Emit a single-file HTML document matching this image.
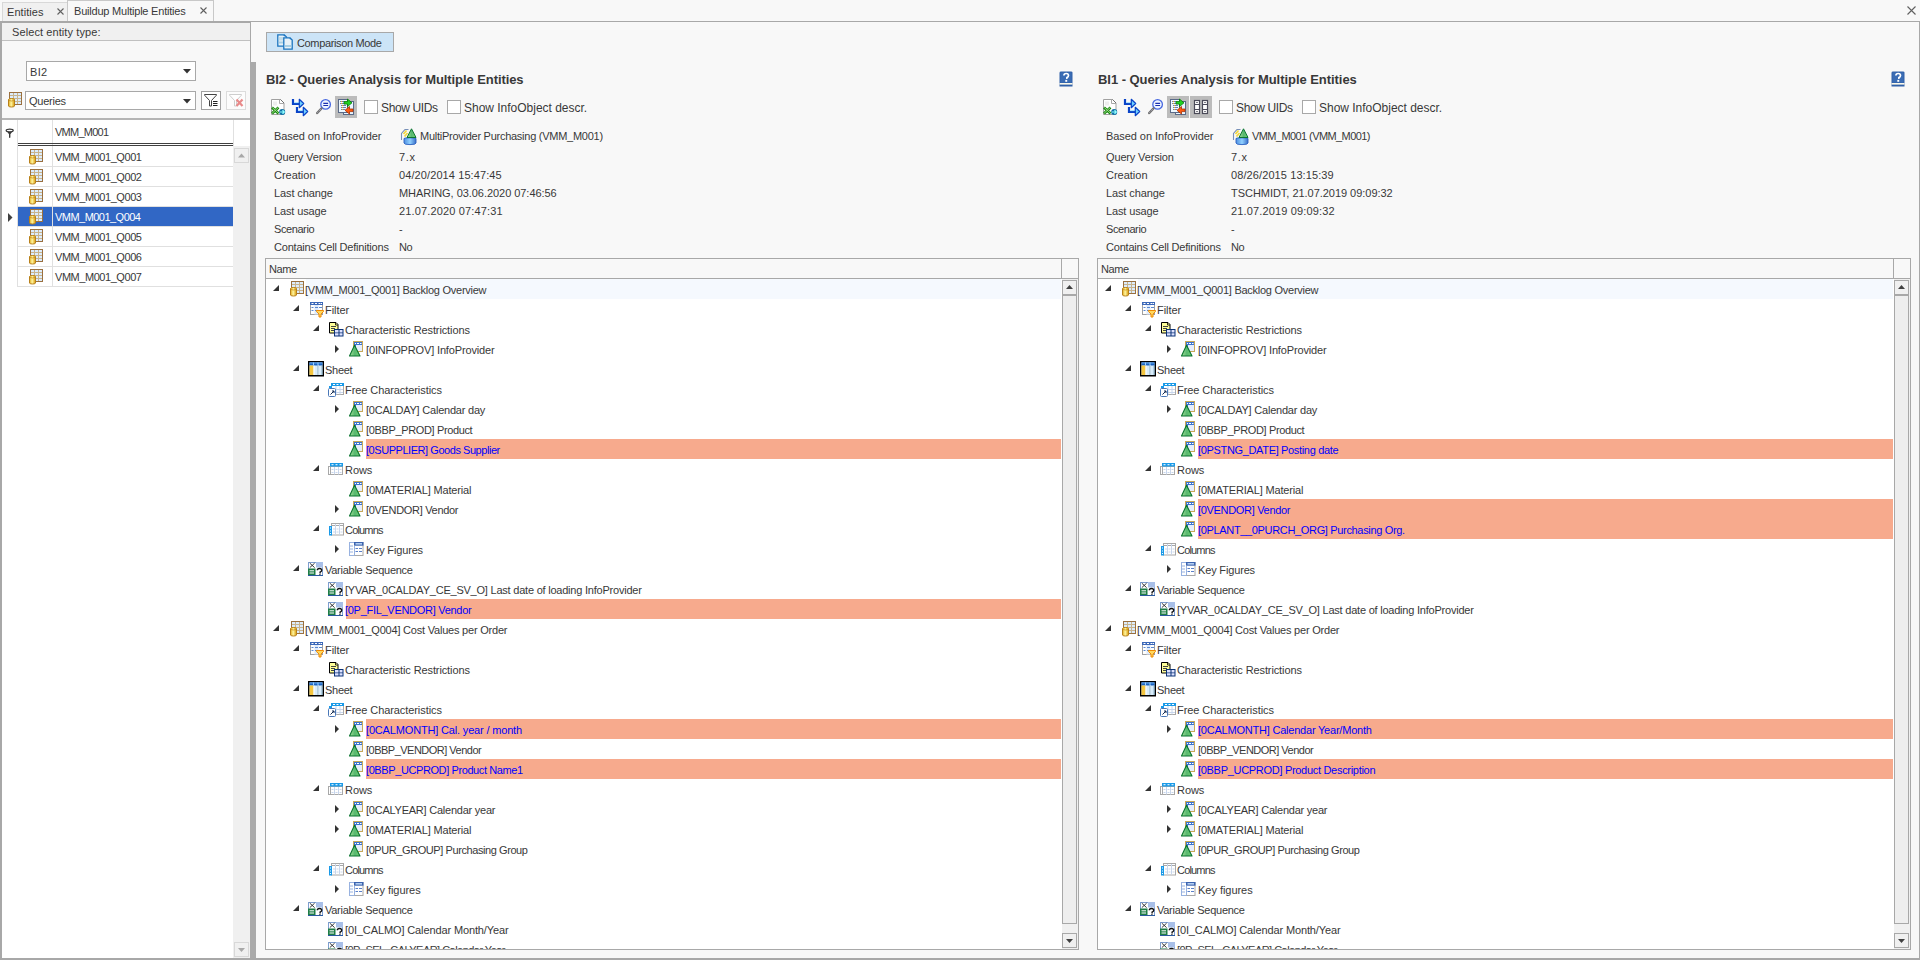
<!DOCTYPE html><html><head><meta charset="utf-8"><title>Buildup Multiple Entities</title><style>
*{margin:0;padding:0;box-sizing:border-box}
html,body{width:1920px;height:960px;overflow:hidden;background:#f8f8f8;font-family:"Liberation Sans", sans-serif;font-size:11px;color:#383838;letter-spacing:-0.25px}
.a{position:absolute}
.t{position:absolute;white-space:nowrap;line-height:13px;height:13px}
svg.i{position:absolute;width:16px;height:16px;overflow:visible}
.hl{position:absolute;background:#f7aa8d;height:20px}
.hlt{color:#0000ff}
</style></head><body>
<svg width="0" height="0" style="position:absolute">
<defs>
<linearGradient id="gold" x1="0" x2="1"><stop offset="0" stop-color="#e0a818"/><stop offset="0.45" stop-color="#fff6a0"/><stop offset="1" stop-color="#d89a08"/></linearGradient>
<linearGradient id="grn" x1="0" x2="1"><stop offset="0" stop-color="#a8e098"/><stop offset="0.5" stop-color="#58b870"/><stop offset="1" stop-color="#70cc70"/></linearGradient>
<linearGradient id="blu" x1="0" x2="1"><stop offset="0" stop-color="#4f8fe0"/><stop offset="0.5" stop-color="#90d0ff"/><stop offset="1" stop-color="#3a70c8"/></linearGradient>
<linearGradient id="lblu" x1="0" y1="0" x2="0" y2="1"><stop offset="0" stop-color="#ffffff"/><stop offset="1" stop-color="#c8e4ff"/></linearGradient>
<symbol id="q" viewBox="0 0 16 16" style="overflow:visible">
 <rect x="2.5" y="0.5" width="12" height="12" fill="#dcecfc" stroke="#9a7040"/>
 <path d="M3 3.5h11M3 6.5h11M3 9.5h11M6.5 1v11M10.5 1v11" stroke="#c8b48e"/>
 <path d="M1.5 7.5 Q1.5 6.5 4.5 6.5 Q7.5 6.5 7.5 7.5 V14 Q7.5 15 4.5 15 Q1.5 15 1.5 14Z" fill="url(#gold)" stroke="#b8801a"/>
 <path d="M2 8.5 Q4.5 9.5 7 8.5" stroke="#c89020" fill="none" stroke-width="0.8"/>
</symbol>
<symbol id="filt" viewBox="0 0 16 16" style="overflow:visible">
 <rect x="1.5" y="1.5" width="12" height="12" fill="#fff" stroke="#a0a0a0"/>
 <rect x="1" y="1" width="13" height="3" fill="#3b68b8"/>
 <path d="M2.5 2.5h2M6 2.5h2M9.5 2.5h2M12 2.5h1" stroke="#fff"/>
 <rect x="5.5" y="4" width="4" height="9.5" fill="#dde9fa"/>
 <path d="M2.5 6.5h2M2.5 9.5h2M6 6.5h3M10 6.5h3M6 9.5h3" stroke="#5a88d0"/>
 <path d="M7.5 9.5h7v1l-2.5 2.5v3h-2v-3l-2.5-2.5z" fill="#ffd860" stroke="#f08a00" stroke-linejoin="round"/>
</symbol>
<symbol id="cres" viewBox="0 0 16 16" style="overflow:visible">
 <path d="M0.5 1.5h6.5l2 2v8.5h-8.5z" fill="#ffff98" stroke="#000"/>
 <path d="M6.5 1.5v2.5h2.5" fill="none" stroke="#000" stroke-width="0.8"/>
 <path d="M2 5.5h5M2 7.5h4M2 9.5h3" stroke="#444"/>
 <rect x="5" y="8" width="9.5" height="7.5" fill="#0b3276"/>
 <path d="M6 9h3.5v2.5h-3.5zM10.5 9h3v2.5h-3zM6 12.3h3.5v2.3h-3.5zM10.5 12.3h3v2.3h-3z" fill="#dde2ff"/>
</symbol>
<symbol id="char" viewBox="0 0 16 16" style="overflow:visible">
 <rect x="4.5" y="0.5" width="9" height="10" fill="#e6eefc" stroke="#c8a858"/>
 <rect x="5" y="1" width="8" height="3" fill="#3c74d0"/>
 <path d="M6 2.5h1M8 2.5h2M11 2.5h1.5" stroke="#fff"/>
 <rect x="5" y="4" width="2" height="6" fill="#3c74d0"/>
 <path d="M5.5 4.2 L11 15 H0.5 Z" fill="url(#grn)" stroke="#0a7430" stroke-width="1.1" stroke-linejoin="round"/>
</symbol>
<symbol id="sheet" viewBox="0 0 16 16" style="overflow:visible">
 <rect x="-0.25" y="0.75" width="14.5" height="14" fill="#d8ecfa" stroke="#000" stroke-width="1.5"/>
 <rect x="0.5" y="1.5" width="13" height="3" fill="#1a62c0"/>
 <rect x="0.5" y="1.5" width="13" height="1" fill="#60a8f0"/>
 <rect x="0.5" y="4.5" width="4" height="9.5" fill="#f4c640"/>
 <path d="M5 4.5v9.5M9.5 4.5v9.5" stroke="#fff"/>
 <path d="M9 4.5v9.5M13 4.5v9.5" stroke="#8ab0c8"/>
 <path d="M4.5 1.5v3M9 1.5v3" stroke="#9cd0ff"/>
</symbol>
<symbol id="free" viewBox="0 0 16 16" style="overflow:visible">
 <rect x="2.5" y="2.5" width="12" height="11" fill="#fff" stroke="#a8a8a8"/>
 <rect x="2" y="2" width="13" height="3" fill="#1a9ae8"/>
 <path d="M4 3.5h2M7.5 3.5h2M11 3.5h2" stroke="#fff"/>
 <path d="M7 5v8.5M11 5v8.5M4 8.5h10M4 11.5h10" stroke="#c8d6ec"/>
 <rect x="0" y="5" width="3" height="2.5" fill="#1a9ae8"/>
 <rect x="-0.5" y="7.5" width="7" height="8" rx="1" fill="#fff" stroke="#4a78b8"/>
 <path d="M1.5 13.5l3.5-3.5M3 10h2v2" stroke="#102850" fill="none"/>
</symbol>
<symbol id="rows" viewBox="0 0 16 16" style="overflow:visible">
 <rect x="-0.5" y="5.5" width="14" height="8" fill="#fff" stroke="#a8a8a8"/>
 <path d="M1.5 6v7.5" stroke="#a8a8a8"/>
 <rect x="1" y="2" width="13" height="3.5" fill="#1a9ae8"/>
 <path d="M2.5 3.7h2M6.5 3.7h2M10.5 3.7h2" stroke="#fff"/>
 <path d="M5.5 6v7.5M9.5 6v7.5M2.5 8.5h2M6.5 8.5h2M10.5 8.5h2M2.5 11.5h2M6.5 11.5h2M10.5 11.5h2" stroke="#c8d6ec"/>
</symbol>
<symbol id="cols" viewBox="0 0 16 16" style="overflow:visible">
 <rect x="2.5" y="2.5" width="12" height="11.5" fill="#fff" stroke="#a8a8a8"/>
 <path d="M3 4.5h11" stroke="#a8a8a8"/>
 <path d="M6.5 3v10.5M10.5 3v10.5M4 8h2M7.5 8h2M11.5 8h2M4 11h2M7.5 11h2M11.5 11h2" stroke="#c8d6ec"/>
 <rect x="0" y="5" width="3" height="9.5" fill="#1a9ae8"/>
 <path d="M1.5 6.5v1M1.5 9.5v1M1.5 12v1" stroke="#fff"/>
</symbol>
<symbol id="kf" viewBox="0 0 16 16" style="overflow:visible">
 <rect x="0.5" y="1.5" width="5" height="13" fill="#fff" stroke="#98b2e0"/>
 <path d="M1 5h3M1 8h3M1 11h3" stroke="#98b2e0"/>
 <rect x="5.5" y="1.5" width="8.5" height="13" fill="#fff" stroke="#a8a8a8"/>
 <rect x="5" y="1" width="9.5" height="3.7" fill="#3c64b0"/>
 <rect x="6.5" y="2.2" width="6.5" height="1.3" fill="#d0e8ff"/>
 <path d="M5.5 4.5v10" stroke="#98b2e0"/>
 <path d="M6.5 7.5h2.5M10 7.5h3M6.5 10.5h2.5M10 10.5h3" stroke="#5a80c8"/>
</symbol>
<symbol id="var" viewBox="0 0 16 16" style="overflow:visible"><g transform="translate(-1,1)">
 <rect x="0.5" y="0.5" width="14" height="13" fill="#fff" stroke="#7f9fd0"/>
 <rect x="8" y="0" width="7" height="5.5" fill="#a8bfe8"/>
 <path d="M1.8 1.2l4.8 4.4M6.6 1.2l-4.8 4.4" stroke="#222" stroke-width="0.9"/>
 <rect x="0" y="6.5" width="7.5" height="7.5" fill="#1f7e46"/>
 <path d="M1.5 8.8h4.5M1.5 11h4.5" stroke="#fff" stroke-width="1"/>
 <path d="M9.3 8.3q0-1.8 2.2-1.8t2.2 1.8q0 1.2-1.6 1.8v1.3M11.9 12.2v1.2" stroke="#111" stroke-width="1.4" fill="none"/>
 <path d="M0 13.5h15" stroke="#2a5aa0"/>
</g></symbol>
<symbol id="mprov" viewBox="0 0 16 16" style="overflow:visible">
 <path d="M1.5 12V5.5l3.5-4h3.5" fill="none" stroke="#7890b8" stroke-width="1.1"/>
 <path d="M3.5 6l3-3.5M4.5 8.5l3-3.5" stroke="#f2d840" stroke-width="1.8"/>
 <path d="M4 10.5 Q4 9.8 10 9.8 Q16 9.8 16 10.5 V15 Q16 16.6 10 16.6 Q4 16.6 4 15Z" fill="url(#blu)" stroke="#2a60c0" stroke-width="0.9"/>
 <path d="M11.5 0.8 L16 9.5 H7 Z" fill="url(#grn)" stroke="#0a7430" stroke-linejoin="round"/>
</symbol>
<symbol id="help" viewBox="0 0 16 16" style="overflow:visible">
 <path d="M1.5 1.8 Q1.5 0.5 3 0.5H13Q14.5 0.5 14.5 1.8V15.5H1.5Z" fill="#3060a8"/>
 <rect x="2.5" y="1.5" width="11" height="10" fill="#3a6cb4"/>
 <rect x="1.5" y="12" width="13" height="1.6" fill="#fbf8ea"/>
 <path d="M5.9 4.6q0-2.1 2.3-2.1t2.3 2.1q0 1.4-1.6 2v1.3" stroke="#fff" stroke-width="1.7" fill="none"/>
 <rect x="7.3" y="8.9" width="1.9" height="1.9" fill="#fff"/>
</symbol>
<symbol id="excel" viewBox="0 0 16 16" style="overflow:visible">
 <path d="M1.5 0.5h9l3.5 3.5v11.5h-12.5z" fill="#fff" stroke="#a0a0a0"/>
 <path d="M9.5 0.5v4h4.5" fill="none" stroke="#a8a8a8"/>
 <path d="M10.5 0.5l3.5 3.5" stroke="#707070"/>
 <rect x="3" y="2.5" width="4" height="4" fill="#eeeeee"/>
 <path d="M2 8.5l6.5 6M8.5 8.5l-6.5 6" stroke="#1a8a10" stroke-width="2.6"/>
 <path d="M2.5 8.8l6 5.4M8 8.8l-5.8 5.4" stroke="#a8e090" stroke-width="0.9"/>
 <circle cx="12.2" cy="13" r="3" fill="#0c70a8"/>
 <path d="M10 13h4M12.5 11.3l1.8 1.7-1.8 1.7" stroke="#90ffff" stroke-width="1.2" fill="none"/>
</symbol>
<symbol id="arrows" viewBox="0 0 16 16" style="overflow:visible">
 <g id="arr1">
 <path d="M1 0v5h7" fill="none" stroke="#0a44c8" stroke-width="2.2"/>
 <path d="M2.2 3.6h5.5" stroke="#9ae0ff" stroke-width="0.9"/>
 <path d="M7.3 0.3l4.4 4.2-4.4 4.2z" fill="#70d0ff" stroke="#0a44c8" stroke-width="1.2" stroke-linejoin="round"/>
 </g>
 <use href="#arr1" x="4" y="8"/>
</symbol>
<symbol id="zoom" viewBox="0 0 16 16" style="overflow:visible">
 <circle cx="9.6" cy="5.4" r="4.8" fill="#f0f6ff" stroke="#4868e0" stroke-width="1.3"/>
 <path d="M7.3 4.4h4.8M7.3 6.5h4.8" stroke="#1a30b0" stroke-width="1.1"/>
 <path d="M1.2 14l4.2-4.5" stroke="#707070" stroke-width="2.4" stroke-linecap="round"/>
 <path d="M1.5 13.6l3.6-3.8" stroke="#d8d8f0" stroke-width="0.7" stroke-dasharray="1 1"/>
</symbol>
<symbol id="cmp" viewBox="0 0 16 16" style="overflow:visible">
 <rect x="5.5" y="2.5" width="10" height="13" fill="#eaf6ff" stroke="#5a6a88"/>
 <rect x="0.5" y="0.5" width="9" height="13" fill="#eef8ff" stroke="#5a6a88"/>
 <path d="M2 2.5h4M2 4.5h4M3 6.5h5M3 8.5h5M3 10.5h4" stroke="#6880b0" stroke-width="1"/>
 <path d="M3 2.5h1M3 4.5h1M4 6.5h1M4 8.5h1M4 10.5h1" stroke="#f0b020" stroke-width="1"/>
 <path d="M6 2.5h3.5v-2.5l4.5 3.8-4.5 3.8v-2.5h-3.5z" fill="#20d020" stroke="#087808" stroke-width="0.8" stroke-linejoin="round"/>
 <path d="M15 10h-3.5v-2.5l-4.5 3.8 4.5 3.8v-2.5h3.5z" fill="#ff5a10" stroke="#a83000" stroke-width="0.8" stroke-linejoin="round"/>
</symbol>
<symbol id="grid4" viewBox="0 0 16 16" style="overflow:visible">
 <rect x="1.5" y="1.5" width="5" height="13" fill="#fff" stroke="#4a4a58" stroke-width="1.2"/>
 <rect x="9.5" y="1.5" width="5" height="13" fill="#fff" stroke="#4a4a58" stroke-width="1.2"/>
 <path d="M1.5 5.5h5M1.5 10.5h5M9.5 5.5h5M9.5 10.5h5" stroke="#4a4a58"/>
 <path d="M3.3 3.5h1.4M3.3 12.5h1.4M11.3 3.5h1.4M11.3 12.5h1.4" stroke="#4a4a58" stroke-width="1.2"/>
</symbol>
<symbol id="cmode" viewBox="0 0 16 16" style="overflow:visible">
 <path d="M0.8 0.8h6.5l2.2 2.2v9.2h-8.7z" fill="#e8f2f8" stroke="#1a74c0" stroke-width="1.3"/>
 <rect x="1.8" y="3" width="5" height="3.5" fill="#c0dcea"/>
 <rect x="1.8" y="7.5" width="6.5" height="2" fill="#a8cfe4"/>
 <path d="M6.8 3.8h6.2l2.2 2.2v9.2h-8.4z" fill="#e8f2f8" stroke="#1a74c0" stroke-width="1.3"/>
 <rect x="7.8" y="11" width="6.5" height="2" fill="#a8cfe4"/>
 <circle cx="7.3" cy="1.6" r="0.8" fill="#1a74c0"/><circle cx="13.3" cy="4.6" r="0.8" fill="#1a74c0"/>
</symbol>
<symbol id="funnel" viewBox="0 0 16 16" style="overflow:visible">
 <path d="M1.5 1.5h12v0.6l-5 5.4v5.5h-2v-5.5l-5-5.4z" fill="#fff" stroke="#444" stroke-width="1" stroke-linejoin="round"/>
 <path d="M10 8.5h4.5M10 10.5h4.5M10 12.5h4.5" stroke="#222" stroke-width="1.1"/>
</symbol>
<symbol id="funnelx" viewBox="0 0 16 16" style="overflow:visible">
 <path d="M1.5 1.5h12v0.6l-5 5.4v5.5h-2v-5.5l-5-5.4z" fill="#fff" stroke="#c8c8c8" stroke-width="0.9"/>
 <path d="M8.5 6.5l6 6.5M14.5 6.5l-6 6.5" stroke="#e88a8a" stroke-width="2.2"/>
</symbol>
</defs></svg>
<div class="a" style="left:2px;top:2px;width:66px;height:20px;background:#f0f0f0;border:1px solid #d8d8d8;border-bottom:none"></div>
<div class="t" style="left:7px;top:6px;letter-spacing:0.061px;">Entities</div>
<svg class="a" style="left:57px;top:8px" width="7" height="7"><path d="M0.5 0.5l6 6M6.5 0.5l-6 6" stroke="#606060" stroke-width="1.1"/></svg>
<div class="a" style="left:67px;top:0px;width:147px;height:22px;background:#f8f8f8;border:1px solid #c8c8c8;border-bottom:none"></div>
<div class="t" style="left:74px;top:5px;letter-spacing:-0.211px;">Buildup Multiple Entities</div>
<svg class="a" style="left:200px;top:7px" width="7" height="7"><path d="M0.5 0.5l6 6M6.5 0.5l-6 6" stroke="#606060" stroke-width="1.1"/></svg>
<svg class="a" style="left:1907px;top:6px" width="9" height="9"><path d="M0.5 0.5l8 8M8.5 0.5l-8 8" stroke="#606060" stroke-width="1.1"/></svg>
<div class="a" style="left:0px;top:21px;width:1920px;height:1px;background:#a8a8a8"></div>
<div class="a" style="left:1919px;top:21px;width:1px;height:939px;background:#a8a8a8"></div>
<div class="a" style="left:256px;top:958px;width:1664px;height:2px;background:#a8a8a8"></div>
<div class="a" style="left:0px;top:22px;width:2px;height:938px;background:#a8a8a8"></div>
<div class="a" style="left:0px;top:22px;width:251px;height:1px;background:#a8a8a8"></div>
<div class="a" style="left:250px;top:22px;width:1px;height:40px;background:#a8a8a8"></div>
<div class="a" style="left:250px;top:62px;width:6px;height:898px;background:#aaaaaa"></div>
<div class="a" style="left:0px;top:958px;width:256px;height:2px;background:#a8a8a8"></div>
<div class="a" style="left:2px;top:23px;width:248px;height:17px;background:#f0f0f0"></div>
<div class="a" style="left:2px;top:40px;width:248px;height:1px;background:#c0c0c0"></div>
<div class="t" style="left:12px;top:26px;letter-spacing:0.091px;">Select entity type:</div>
<div class="a" style="left:26px;top:61px;width:170px;height:20px;background:#fff;border:1px solid #a8a8a8"></div>
<div class="t" style="left:30px;top:66px;letter-spacing:0.35px;">BI2</div>
<svg class="a" style="left:183px;top:69px" width="8" height="5"><path d="M0 0h8l-4 4.5z" fill="#333"/></svg>
<svg class="i" style="left:7px;top:92px;width:16px;height:16px"><use href="#q"/></svg>
<div class="a" style="left:25px;top:91px;width:171px;height:19px;background:#fff;border:1px solid #a8a8a8"></div>
<div class="t" style="left:29px;top:95px;letter-spacing:-0.236px;">Queries</div>
<svg class="a" style="left:183px;top:99px" width="8" height="5"><path d="M0 0h8l-4 4.5z" fill="#333"/></svg>
<div class="a" style="left:201px;top:91px;width:20px;height:19px;background:#fff;border:1px solid #a0a0a0"></div>
<svg class="i" style="left:203px;top:93px;width:16px;height:16px"><use href="#funnel"/></svg>
<div class="a" style="left:226px;top:91px;width:20px;height:19px;background:#fcfcfc;border:1px solid #dcdcdc"></div>
<svg class="i" style="left:228px;top:93px;width:16px;height:16px"><use href="#funnelx"/></svg>
<div class="a" style="left:2px;top:118px;width:248px;height:2px;background:#b4b4b4"></div>
<div class="a" style="left:2px;top:120px;width:248px;height:838px;background:#fff"></div>
<div class="a" style="left:233px;top:146px;width:17px;height:812px;background:#f0f0f0"></div>
<div class="a" style="left:17px;top:120px;width:1px;height:167px;background:#e0e0e0"></div>
<div class="a" style="left:52px;top:120px;width:1px;height:167px;background:#e0e0e0"></div>
<div class="a" style="left:233px;top:120px;width:1px;height:26px;background:#e0e0e0"></div>
<div class="a" style="left:18px;top:143px;width:215px;height:1px;background:#404040"></div>
<div class="a" style="left:18px;top:145px;width:215px;height:1px;background:#404040"></div>
<svg class="a" style="left:5px;top:128px" width="10" height="11"><path d="M1.3 2.6 Q4.7 5 8.1 2.6 L5.4 6.2 V9.5 Q4.7 10.3 4 9.5 V6.2 Z" fill="#3a3a3a"/><ellipse cx="4.7" cy="2.4" rx="3.6" ry="1.3" fill="#fff" stroke="#3a3a3a" stroke-width="1.1"/></svg>
<div class="t" style="left:55px;top:126px;letter-spacing:-0.74px;">VMM_M001</div>
<div class="a" style="left:18px;top:166px;width:215px;height:1px;background:#e0e0e0"></div>
<svg class="i" style="left:28px;top:149px;width:16px;height:16px"><use href="#q"/></svg>
<div class="t" style="left:55px;top:151px;letter-spacing:-0.45px;">VMM_M001_Q001</div>
<div class="a" style="left:18px;top:186px;width:215px;height:1px;background:#e0e0e0"></div>
<svg class="i" style="left:28px;top:169px;width:16px;height:16px"><use href="#q"/></svg>
<div class="t" style="left:55px;top:171px;letter-spacing:-0.45px;">VMM_M001_Q002</div>
<div class="a" style="left:18px;top:206px;width:215px;height:1px;background:#e0e0e0"></div>
<svg class="i" style="left:28px;top:189px;width:16px;height:16px"><use href="#q"/></svg>
<div class="t" style="left:55px;top:191px;letter-spacing:-0.45px;">VMM_M001_Q003</div>
<div class="a" style="left:18px;top:226px;width:215px;height:1px;background:#e0e0e0"></div>
<div class="a" style="left:18px;top:207px;width:34px;height:19px;background:#3167c5"></div>
<div class="a" style="left:53px;top:207px;width:180px;height:19px;background:#3167c5"></div>
<svg class="a" style="left:8px;top:213px" width="5" height="9"><path d="M0 0l4.5 4.5L0 9z" fill="#404040"/></svg>
<svg class="i" style="left:28px;top:209px;width:16px;height:16px"><use href="#q"/></svg>
<div class="t" style="left:55px;top:211px;letter-spacing:-0.534px;color:#fff">VMM_M001_Q004</div>
<div class="a" style="left:18px;top:246px;width:215px;height:1px;background:#e0e0e0"></div>
<svg class="i" style="left:28px;top:229px;width:16px;height:16px"><use href="#q"/></svg>
<div class="t" style="left:55px;top:231px;letter-spacing:-0.45px;">VMM_M001_Q005</div>
<div class="a" style="left:18px;top:266px;width:215px;height:1px;background:#e0e0e0"></div>
<svg class="i" style="left:28px;top:249px;width:16px;height:16px"><use href="#q"/></svg>
<div class="t" style="left:55px;top:251px;letter-spacing:-0.45px;">VMM_M001_Q006</div>
<div class="a" style="left:18px;top:286px;width:215px;height:1px;background:#e0e0e0"></div>
<svg class="i" style="left:28px;top:269px;width:16px;height:16px"><use href="#q"/></svg>
<div class="t" style="left:55px;top:271px;letter-spacing:-0.45px;">VMM_M001_Q007</div>
<div class="a" style="left:234px;top:148px;width:15px;height:15px;background:#f0f0f0;border:1px solid #d8d8d8"></div>
<svg class="a" style="left:238px;top:153px" width="8" height="5"><path d="M0 4.5h7l-3.5-4z" fill="#a8a8a8"/></svg>
<div class="a" style="left:234px;top:942px;width:15px;height:15px;background:#f0f0f0;border:1px solid #d8d8d8"></div>
<svg class="a" style="left:238px;top:948px" width="8" height="5"><path d="M0 0h7l-3.5 4z" fill="#a8a8a8"/></svg>
<div class="a" style="left:266px;top:32px;width:128px;height:20px;background:#cce4f7;border:1px solid #a8a8a8"></div>
<svg class="i" style="left:277px;top:34px;width:16px;height:16px"><use href="#cmode"/></svg>
<div class="t" style="left:297px;top:37px;letter-spacing:-0.355px;">Comparison Mode</div>
<div class="t" style="left:266px;top:72px;letter-spacing:-0.08px;font-size:13px;font-weight:bold;line-height:15px;height:15px">BI2 - Queries Analysis for Multiple Entities</div>
<svg class="i" style="left:1058px;top:71px;width:16px;height:16px"><use href="#help"/></svg>
<svg class="i" style="left:270px;top:99px;width:16px;height:16px"><use href="#excel"/></svg>
<svg class="i" style="left:292px;top:99px;width:16px;height:16px"><use href="#arrows"/></svg>
<svg class="i" style="left:316px;top:99px;width:16px;height:16px"><use href="#zoom"/></svg>
<div class="a" style="left:335px;top:96px;width:22px;height:22px;background:#bcbcbc"></div>
<svg class="i" style="left:338px;top:99px;width:16px;height:16px"><use href="#cmp"/></svg>
<div class="a" style="left:364px;top:100px;width:14px;height:14px;background:#fff;border:1px solid #a8a8a8"></div>
<div class="t" style="left:381px;top:101px;letter-spacing:-0.377px;font-size:12px;line-height:14px;height:14px">Show UIDs</div>
<div class="a" style="left:447px;top:100px;width:14px;height:14px;background:#fff;border:1px solid #a8a8a8"></div>
<div class="t" style="left:464px;top:101px;letter-spacing:-0.012px;font-size:12px;line-height:14px;height:14px">Show InfoObject descr.</div>
<div class="t" style="left:274px;top:130px;letter-spacing:-0.069px;">Based on InfoProvider</div>
<svg class="i" style="left:400px;top:128px;width:16px;height:16px"><use href="#mprov"/></svg>
<div class="t" style="left:420px;top:130px;letter-spacing:-0.262px;">MultiProvider Purchasing (VMM_M001)</div>
<div class="t" style="left:274px;top:151px;letter-spacing:-0.148px;">Query Version</div>
<div class="t" style="left:399px;top:151px;letter-spacing:0.613px;">7.x</div>
<div class="t" style="left:274px;top:169px;letter-spacing:-0.008px;">Creation</div>
<div class="t" style="left:399px;top:169px;letter-spacing:0.098px;">04/20/2014 15:47:45</div>
<div class="t" style="left:274px;top:187px;letter-spacing:-0.102px;">Last change</div>
<div class="t" style="left:399px;top:187px;letter-spacing:-0.047px;">MHARING, 03.06.2020 07:46:56</div>
<div class="t" style="left:274px;top:205px;letter-spacing:-0.123px;">Last usage</div>
<div class="t" style="left:399px;top:205px;letter-spacing:0.144px;">21.07.2020 07:47:31</div>
<div class="t" style="left:274px;top:223px;letter-spacing:-0.413px;">Scenario</div>
<div class="t" style="left:399px;top:223px;letter-spacing:-0.25px;">-</div>
<div class="t" style="left:274px;top:241px;letter-spacing:-0.205px;">Contains Cell Definitions</div>
<div class="t" style="left:399px;top:241px;letter-spacing:-0.344px;">No</div>
<div class="a" style="left:265px;top:258px;width:814px;height:692px;background:#fff;border:1px solid #a8a8a8"></div>
<div class="a" style="left:266px;top:259px;width:812px;height:19px;background:#f8f8f8"></div>
<div class="a" style="left:265px;top:278px;width:814px;height:1px;background:#a8a8a8"></div>
<div class="a" style="left:1061px;top:258px;width:1px;height:21px;background:#a8a8a8"></div>
<div class="t" style="left:269px;top:263px;letter-spacing:-0.409px;">Name</div>
<div class="a" style="left:1062px;top:279px;width:16px;height:670px;background:#f0f0f0"></div>
<div class="a" style="left:1062px;top:280px;width:15px;height:15px;background:#f0f0f0;border:1px solid #a8a8a8"></div>
<svg class="a" style="left:1066px;top:285px" width="8" height="5"><path d="M0 4h7l-3.5-4z" fill="#404040"/></svg>
<div class="a" style="left:1062px;top:295px;width:15px;height:629px;background:#eeeeee;border:1px solid #a8a8a8"></div>
<div class="a" style="left:1062px;top:933px;width:15px;height:15px;background:#f0f0f0;border:1px solid #a8a8a8"></div>
<svg class="a" style="left:1066px;top:939px" width="8" height="5"><path d="M0 0h7l-3.5 4z" fill="#404040"/></svg>
<div class="a" style="left:266px;top:279px;width:796px;height:670px;overflow:hidden">
<div class="a" style="left:40px;top:0px;width:755px;height:20px;background:#f5f9fe"></div>
<svg class="a" style="left:7px;top:6px" width="7" height="7"><path d="M6 0V6H0z" fill="#333"/></svg>
<svg class="i" style="left:23px;top:2px;width:16px;height:16px"><use href="#q"/></svg>
<div class="t" style="left:39px;top:5px;letter-spacing:-0.257px;">[VMM_M001_Q001] Backlog Overview</div>
<svg class="a" style="left:27px;top:26px" width="7" height="7"><path d="M6 0V6H0z" fill="#333"/></svg>
<svg class="i" style="left:43px;top:22px;width:16px;height:16px"><use href="#filt"/></svg>
<div class="t" style="left:59px;top:25px;letter-spacing:-0.036px;">Filter</div>
<svg class="a" style="left:47px;top:46px" width="7" height="7"><path d="M6 0V6H0z" fill="#333"/></svg>
<svg class="i" style="left:63px;top:42px;width:16px;height:16px"><use href="#cres"/></svg>
<div class="t" style="left:79px;top:45px;letter-spacing:-0.11px;">Characteristic Restrictions</div>
<svg class="a" style="left:69px;top:66px" width="5" height="9"><path d="M0 0l4 4L0 8z" fill="#333"/></svg>
<svg class="i" style="left:83px;top:62px;width:16px;height:16px"><use href="#char"/></svg>
<div class="t" style="left:100px;top:65px;letter-spacing:-0.147px;">[0INFOPROV] InfoProvider</div>
<svg class="a" style="left:27px;top:86px" width="7" height="7"><path d="M6 0V6H0z" fill="#333"/></svg>
<svg class="i" style="left:43px;top:82px;width:16px;height:16px"><use href="#sheet"/></svg>
<div class="t" style="left:59px;top:85px;letter-spacing:-0.274px;">Sheet</div>
<svg class="a" style="left:47px;top:106px" width="7" height="7"><path d="M6 0V6H0z" fill="#333"/></svg>
<svg class="i" style="left:63px;top:102px;width:16px;height:16px"><use href="#free"/></svg>
<div class="t" style="left:79px;top:105px;letter-spacing:-0.079px;">Free Characteristics</div>
<svg class="a" style="left:69px;top:126px" width="5" height="9"><path d="M0 0l4 4L0 8z" fill="#333"/></svg>
<svg class="i" style="left:83px;top:122px;width:16px;height:16px"><use href="#char"/></svg>
<div class="t" style="left:100px;top:125px;letter-spacing:-0.219px;">[0CALDAY] Calendar day</div>
<svg class="i" style="left:83px;top:142px;width:16px;height:16px"><use href="#char"/></svg>
<div class="t" style="left:100px;top:145px;letter-spacing:-0.358px;">[0BBP_PROD] Product</div>
<div class="hl" style="left:100px;top:160px;width:695px"></div>
<svg class="i" style="left:83px;top:162px;width:16px;height:16px"><use href="#char"/></svg>
<div class="t" style="left:100px;top:165px;letter-spacing:-0.45px;color:#0000ff">[0SUPPLIER] Goods Supplier</div>
<svg class="a" style="left:47px;top:186px" width="7" height="7"><path d="M6 0V6H0z" fill="#333"/></svg>
<svg class="i" style="left:63px;top:182px;width:16px;height:16px"><use href="#rows"/></svg>
<div class="t" style="left:79px;top:185px;letter-spacing:-0.068px;">Rows</div>
<svg class="i" style="left:83px;top:202px;width:16px;height:16px"><use href="#char"/></svg>
<div class="t" style="left:100px;top:205px;letter-spacing:-0.166px;">[0MATERIAL] Material</div>
<svg class="a" style="left:69px;top:226px" width="5" height="9"><path d="M0 0l4 4L0 8z" fill="#333"/></svg>
<svg class="i" style="left:83px;top:222px;width:16px;height:16px"><use href="#char"/></svg>
<div class="t" style="left:100px;top:225px;letter-spacing:-0.317px;">[0VENDOR] Vendor</div>
<svg class="a" style="left:47px;top:246px" width="7" height="7"><path d="M6 0V6H0z" fill="#333"/></svg>
<svg class="i" style="left:63px;top:242px;width:16px;height:16px"><use href="#cols"/></svg>
<div class="t" style="left:79px;top:245px;letter-spacing:-0.817px;">Columns</div>
<svg class="a" style="left:69px;top:266px" width="5" height="9"><path d="M0 0l4 4L0 8z" fill="#333"/></svg>
<svg class="i" style="left:83px;top:262px;width:16px;height:16px"><use href="#kf"/></svg>
<div class="t" style="left:100px;top:265px;letter-spacing:-0.159px;">Key Figures</div>
<svg class="a" style="left:27px;top:286px" width="7" height="7"><path d="M6 0V6H0z" fill="#333"/></svg>
<svg class="i" style="left:43px;top:282px;width:16px;height:16px"><use href="#var"/></svg>
<div class="t" style="left:59px;top:285px;letter-spacing:-0.262px;">Variable Sequence</div>
<svg class="i" style="left:63px;top:302px;width:16px;height:16px"><use href="#var"/></svg>
<div class="t" style="left:79px;top:305px;letter-spacing:-0.221px;">[YVAR_0CALDAY_CE_SV_O] Last date of loading InfoProvider</div>
<div class="hl" style="left:80px;top:320px;width:715px"></div>
<svg class="i" style="left:63px;top:322px;width:16px;height:16px"><use href="#var"/></svg>
<div class="t" style="left:79px;top:325px;letter-spacing:-0.286px;color:#0000ff">[0P_FIL_VENDOR] Vendor</div>
<svg class="a" style="left:7px;top:346px" width="7" height="7"><path d="M6 0V6H0z" fill="#333"/></svg>
<svg class="i" style="left:23px;top:342px;width:16px;height:16px"><use href="#q"/></svg>
<div class="t" style="left:39px;top:345px;letter-spacing:-0.213px;">[VMM_M001_Q004] Cost Values per Order</div>
<svg class="a" style="left:27px;top:366px" width="7" height="7"><path d="M6 0V6H0z" fill="#333"/></svg>
<svg class="i" style="left:43px;top:362px;width:16px;height:16px"><use href="#filt"/></svg>
<div class="t" style="left:59px;top:365px;letter-spacing:-0.036px;">Filter</div>
<svg class="i" style="left:63px;top:382px;width:16px;height:16px"><use href="#cres"/></svg>
<div class="t" style="left:79px;top:385px;letter-spacing:-0.11px;">Characteristic Restrictions</div>
<svg class="a" style="left:27px;top:406px" width="7" height="7"><path d="M6 0V6H0z" fill="#333"/></svg>
<svg class="i" style="left:43px;top:402px;width:16px;height:16px"><use href="#sheet"/></svg>
<div class="t" style="left:59px;top:405px;letter-spacing:-0.274px;">Sheet</div>
<svg class="a" style="left:47px;top:426px" width="7" height="7"><path d="M6 0V6H0z" fill="#333"/></svg>
<svg class="i" style="left:63px;top:422px;width:16px;height:16px"><use href="#free"/></svg>
<div class="t" style="left:79px;top:425px;letter-spacing:-0.079px;">Free Characteristics</div>
<div class="hl" style="left:100px;top:440px;width:695px"></div>
<svg class="a" style="left:69px;top:446px" width="5" height="9"><path d="M0 0l4 4L0 8z" fill="#333"/></svg>
<svg class="i" style="left:83px;top:442px;width:16px;height:16px"><use href="#char"/></svg>
<div class="t" style="left:100px;top:445px;letter-spacing:-0.166px;color:#0000ff">[0CALMONTH] Cal. year / month</div>
<svg class="i" style="left:83px;top:462px;width:16px;height:16px"><use href="#char"/></svg>
<div class="t" style="left:100px;top:465px;letter-spacing:-0.509px;">[0BBP_VENDOR] Vendor</div>
<div class="hl" style="left:100px;top:480px;width:695px"></div>
<svg class="i" style="left:83px;top:482px;width:16px;height:16px"><use href="#char"/></svg>
<div class="t" style="left:100px;top:485px;letter-spacing:-0.401px;color:#0000ff">[0BBP_UCPROD] Product Name1</div>
<svg class="a" style="left:47px;top:506px" width="7" height="7"><path d="M6 0V6H0z" fill="#333"/></svg>
<svg class="i" style="left:63px;top:502px;width:16px;height:16px"><use href="#rows"/></svg>
<div class="t" style="left:79px;top:505px;letter-spacing:-0.068px;">Rows</div>
<svg class="a" style="left:69px;top:526px" width="5" height="9"><path d="M0 0l4 4L0 8z" fill="#333"/></svg>
<svg class="i" style="left:83px;top:522px;width:16px;height:16px"><use href="#char"/></svg>
<div class="t" style="left:100px;top:525px;letter-spacing:-0.237px;">[0CALYEAR] Calendar year</div>
<svg class="a" style="left:69px;top:546px" width="5" height="9"><path d="M0 0l4 4L0 8z" fill="#333"/></svg>
<svg class="i" style="left:83px;top:542px;width:16px;height:16px"><use href="#char"/></svg>
<div class="t" style="left:100px;top:545px;letter-spacing:-0.166px;">[0MATERIAL] Material</div>
<svg class="i" style="left:83px;top:562px;width:16px;height:16px"><use href="#char"/></svg>
<div class="t" style="left:100px;top:565px;letter-spacing:-0.418px;">[0PUR_GROUP] Purchasing Group</div>
<svg class="a" style="left:47px;top:586px" width="7" height="7"><path d="M6 0V6H0z" fill="#333"/></svg>
<svg class="i" style="left:63px;top:582px;width:16px;height:16px"><use href="#cols"/></svg>
<div class="t" style="left:79px;top:585px;letter-spacing:-0.817px;">Columns</div>
<svg class="a" style="left:69px;top:606px" width="5" height="9"><path d="M0 0l4 4L0 8z" fill="#333"/></svg>
<svg class="i" style="left:83px;top:602px;width:16px;height:16px"><use href="#kf"/></svg>
<div class="t" style="left:100px;top:605px;letter-spacing:-0.033px;">Key figures</div>
<svg class="a" style="left:27px;top:626px" width="7" height="7"><path d="M6 0V6H0z" fill="#333"/></svg>
<svg class="i" style="left:43px;top:622px;width:16px;height:16px"><use href="#var"/></svg>
<div class="t" style="left:59px;top:625px;letter-spacing:-0.262px;">Variable Sequence</div>
<svg class="i" style="left:63px;top:642px;width:16px;height:16px"><use href="#var"/></svg>
<div class="t" style="left:79px;top:645px;letter-spacing:-0.119px;">[0I_CALMO] Calendar Month/Year</div>
<svg class="i" style="left:63px;top:662px;width:16px;height:16px"><use href="#var"/></svg>
<div class="t" style="left:79px;top:665px;letter-spacing:-0.532px;">[0P_SEL_CALYEAR] Calendar Year</div>
</div>
<div class="t" style="left:1098px;top:72px;letter-spacing:-0.052px;font-size:13px;font-weight:bold;line-height:15px;height:15px">BI1 - Queries Analysis for Multiple Entities</div>
<svg class="i" style="left:1890px;top:71px;width:16px;height:16px"><use href="#help"/></svg>
<svg class="i" style="left:1102px;top:99px;width:16px;height:16px"><use href="#excel"/></svg>
<svg class="i" style="left:1124px;top:99px;width:16px;height:16px"><use href="#arrows"/></svg>
<svg class="i" style="left:1148px;top:99px;width:16px;height:16px"><use href="#zoom"/></svg>
<div class="a" style="left:1167px;top:96px;width:22px;height:22px;background:#bcbcbc"></div>
<svg class="i" style="left:1170px;top:99px;width:16px;height:16px"><use href="#cmp"/></svg>
<div class="a" style="left:1190px;top:96px;width:22px;height:22px;background:#bcbcbc"></div>
<svg class="i" style="left:1193px;top:99px;width:16px;height:16px"><use href="#grid4"/></svg>
<div class="a" style="left:1219px;top:100px;width:14px;height:14px;background:#fff;border:1px solid #a8a8a8"></div>
<div class="t" style="left:1236px;top:101px;letter-spacing:-0.377px;font-size:12px;line-height:14px;height:14px">Show UIDs</div>
<div class="a" style="left:1302px;top:100px;width:14px;height:14px;background:#fff;border:1px solid #a8a8a8"></div>
<div class="t" style="left:1319px;top:101px;letter-spacing:-0.012px;font-size:12px;line-height:14px;height:14px">Show InfoObject descr.</div>
<div class="t" style="left:1106px;top:130px;letter-spacing:-0.069px;">Based on InfoProvider</div>
<svg class="i" style="left:1232px;top:128px;width:16px;height:16px"><use href="#mprov"/></svg>
<div class="t" style="left:1252px;top:130px;letter-spacing:-0.584px;">VMM_M001 (VMM_M001)</div>
<div class="t" style="left:1106px;top:151px;letter-spacing:-0.148px;">Query Version</div>
<div class="t" style="left:1231px;top:151px;letter-spacing:0.613px;">7.x</div>
<div class="t" style="left:1106px;top:169px;letter-spacing:-0.008px;">Creation</div>
<div class="t" style="left:1231px;top:169px;letter-spacing:0.098px;">08/26/2015 13:15:39</div>
<div class="t" style="left:1106px;top:187px;letter-spacing:-0.102px;">Last change</div>
<div class="t" style="left:1231px;top:187px;letter-spacing:-0.034px;">TSCHMIDT, 21.07.2019 09:09:32</div>
<div class="t" style="left:1106px;top:205px;letter-spacing:-0.123px;">Last usage</div>
<div class="t" style="left:1231px;top:205px;letter-spacing:0.144px;">21.07.2019 09:09:32</div>
<div class="t" style="left:1106px;top:223px;letter-spacing:-0.413px;">Scenario</div>
<div class="t" style="left:1231px;top:223px;letter-spacing:-0.25px;">-</div>
<div class="t" style="left:1106px;top:241px;letter-spacing:-0.205px;">Contains Cell Definitions</div>
<div class="t" style="left:1231px;top:241px;letter-spacing:-0.344px;">No</div>
<div class="a" style="left:1097px;top:258px;width:814px;height:692px;background:#fff;border:1px solid #a8a8a8"></div>
<div class="a" style="left:1098px;top:259px;width:812px;height:19px;background:#f8f8f8"></div>
<div class="a" style="left:1097px;top:278px;width:814px;height:1px;background:#a8a8a8"></div>
<div class="a" style="left:1893px;top:258px;width:1px;height:21px;background:#a8a8a8"></div>
<div class="t" style="left:1101px;top:263px;letter-spacing:-0.409px;">Name</div>
<div class="a" style="left:1894px;top:279px;width:16px;height:670px;background:#f0f0f0"></div>
<div class="a" style="left:1894px;top:280px;width:15px;height:15px;background:#f0f0f0;border:1px solid #a8a8a8"></div>
<svg class="a" style="left:1898px;top:285px" width="8" height="5"><path d="M0 4h7l-3.5-4z" fill="#404040"/></svg>
<div class="a" style="left:1894px;top:295px;width:15px;height:629px;background:#eeeeee;border:1px solid #a8a8a8"></div>
<div class="a" style="left:1894px;top:933px;width:15px;height:15px;background:#f0f0f0;border:1px solid #a8a8a8"></div>
<svg class="a" style="left:1898px;top:939px" width="8" height="5"><path d="M0 0h7l-3.5 4z" fill="#404040"/></svg>
<div class="a" style="left:1098px;top:279px;width:796px;height:670px;overflow:hidden">
<div class="a" style="left:40px;top:0px;width:755px;height:20px;background:#f5f9fe"></div>
<svg class="a" style="left:7px;top:6px" width="7" height="7"><path d="M6 0V6H0z" fill="#333"/></svg>
<svg class="i" style="left:23px;top:2px;width:16px;height:16px"><use href="#q"/></svg>
<div class="t" style="left:39px;top:5px;letter-spacing:-0.257px;">[VMM_M001_Q001] Backlog Overview</div>
<svg class="a" style="left:27px;top:26px" width="7" height="7"><path d="M6 0V6H0z" fill="#333"/></svg>
<svg class="i" style="left:43px;top:22px;width:16px;height:16px"><use href="#filt"/></svg>
<div class="t" style="left:59px;top:25px;letter-spacing:-0.036px;">Filter</div>
<svg class="a" style="left:47px;top:46px" width="7" height="7"><path d="M6 0V6H0z" fill="#333"/></svg>
<svg class="i" style="left:63px;top:42px;width:16px;height:16px"><use href="#cres"/></svg>
<div class="t" style="left:79px;top:45px;letter-spacing:-0.11px;">Characteristic Restrictions</div>
<svg class="a" style="left:69px;top:66px" width="5" height="9"><path d="M0 0l4 4L0 8z" fill="#333"/></svg>
<svg class="i" style="left:83px;top:62px;width:16px;height:16px"><use href="#char"/></svg>
<div class="t" style="left:100px;top:65px;letter-spacing:-0.147px;">[0INFOPROV] InfoProvider</div>
<svg class="a" style="left:27px;top:86px" width="7" height="7"><path d="M6 0V6H0z" fill="#333"/></svg>
<svg class="i" style="left:43px;top:82px;width:16px;height:16px"><use href="#sheet"/></svg>
<div class="t" style="left:59px;top:85px;letter-spacing:-0.274px;">Sheet</div>
<svg class="a" style="left:47px;top:106px" width="7" height="7"><path d="M6 0V6H0z" fill="#333"/></svg>
<svg class="i" style="left:63px;top:102px;width:16px;height:16px"><use href="#free"/></svg>
<div class="t" style="left:79px;top:105px;letter-spacing:-0.079px;">Free Characteristics</div>
<svg class="a" style="left:69px;top:126px" width="5" height="9"><path d="M0 0l4 4L0 8z" fill="#333"/></svg>
<svg class="i" style="left:83px;top:122px;width:16px;height:16px"><use href="#char"/></svg>
<div class="t" style="left:100px;top:125px;letter-spacing:-0.219px;">[0CALDAY] Calendar day</div>
<svg class="i" style="left:83px;top:142px;width:16px;height:16px"><use href="#char"/></svg>
<div class="t" style="left:100px;top:145px;letter-spacing:-0.358px;">[0BBP_PROD] Product</div>
<div class="hl" style="left:100px;top:160px;width:695px"></div>
<svg class="i" style="left:83px;top:162px;width:16px;height:16px"><use href="#char"/></svg>
<div class="t" style="left:100px;top:165px;letter-spacing:-0.338px;color:#0000ff">[0PSTNG_DATE] Posting date</div>
<svg class="a" style="left:47px;top:186px" width="7" height="7"><path d="M6 0V6H0z" fill="#333"/></svg>
<svg class="i" style="left:63px;top:182px;width:16px;height:16px"><use href="#rows"/></svg>
<div class="t" style="left:79px;top:185px;letter-spacing:-0.068px;">Rows</div>
<svg class="i" style="left:83px;top:202px;width:16px;height:16px"><use href="#char"/></svg>
<div class="t" style="left:100px;top:205px;letter-spacing:-0.166px;">[0MATERIAL] Material</div>
<div class="hl" style="left:100px;top:220px;width:695px"></div>
<svg class="i" style="left:83px;top:222px;width:16px;height:16px"><use href="#char"/></svg>
<div class="t" style="left:100px;top:225px;letter-spacing:-0.317px;color:#0000ff">[0VENDOR] Vendor</div>
<div class="hl" style="left:100px;top:240px;width:695px"></div>
<svg class="i" style="left:83px;top:242px;width:16px;height:16px"><use href="#char"/></svg>
<div class="t" style="left:100px;top:245px;letter-spacing:-0.337px;color:#0000ff">[0PLANT__0PURCH_ORG] Purchasing Org.</div>
<svg class="a" style="left:47px;top:266px" width="7" height="7"><path d="M6 0V6H0z" fill="#333"/></svg>
<svg class="i" style="left:63px;top:262px;width:16px;height:16px"><use href="#cols"/></svg>
<div class="t" style="left:79px;top:265px;letter-spacing:-0.817px;">Columns</div>
<svg class="a" style="left:69px;top:286px" width="5" height="9"><path d="M0 0l4 4L0 8z" fill="#333"/></svg>
<svg class="i" style="left:83px;top:282px;width:16px;height:16px"><use href="#kf"/></svg>
<div class="t" style="left:100px;top:285px;letter-spacing:-0.159px;">Key Figures</div>
<svg class="a" style="left:27px;top:306px" width="7" height="7"><path d="M6 0V6H0z" fill="#333"/></svg>
<svg class="i" style="left:43px;top:302px;width:16px;height:16px"><use href="#var"/></svg>
<div class="t" style="left:59px;top:305px;letter-spacing:-0.262px;">Variable Sequence</div>
<svg class="i" style="left:63px;top:322px;width:16px;height:16px"><use href="#var"/></svg>
<div class="t" style="left:79px;top:325px;letter-spacing:-0.221px;">[YVAR_0CALDAY_CE_SV_O] Last date of loading InfoProvider</div>
<svg class="a" style="left:7px;top:346px" width="7" height="7"><path d="M6 0V6H0z" fill="#333"/></svg>
<svg class="i" style="left:23px;top:342px;width:16px;height:16px"><use href="#q"/></svg>
<div class="t" style="left:39px;top:345px;letter-spacing:-0.213px;">[VMM_M001_Q004] Cost Values per Order</div>
<svg class="a" style="left:27px;top:366px" width="7" height="7"><path d="M6 0V6H0z" fill="#333"/></svg>
<svg class="i" style="left:43px;top:362px;width:16px;height:16px"><use href="#filt"/></svg>
<div class="t" style="left:59px;top:365px;letter-spacing:-0.036px;">Filter</div>
<svg class="i" style="left:63px;top:382px;width:16px;height:16px"><use href="#cres"/></svg>
<div class="t" style="left:79px;top:385px;letter-spacing:-0.11px;">Characteristic Restrictions</div>
<svg class="a" style="left:27px;top:406px" width="7" height="7"><path d="M6 0V6H0z" fill="#333"/></svg>
<svg class="i" style="left:43px;top:402px;width:16px;height:16px"><use href="#sheet"/></svg>
<div class="t" style="left:59px;top:405px;letter-spacing:-0.274px;">Sheet</div>
<svg class="a" style="left:47px;top:426px" width="7" height="7"><path d="M6 0V6H0z" fill="#333"/></svg>
<svg class="i" style="left:63px;top:422px;width:16px;height:16px"><use href="#free"/></svg>
<div class="t" style="left:79px;top:425px;letter-spacing:-0.079px;">Free Characteristics</div>
<div class="hl" style="left:100px;top:440px;width:695px"></div>
<svg class="a" style="left:69px;top:446px" width="5" height="9"><path d="M0 0l4 4L0 8z" fill="#333"/></svg>
<svg class="i" style="left:83px;top:442px;width:16px;height:16px"><use href="#char"/></svg>
<div class="t" style="left:100px;top:445px;letter-spacing:-0.215px;color:#0000ff">[0CALMONTH] Calendar Year/Month</div>
<svg class="i" style="left:83px;top:462px;width:16px;height:16px"><use href="#char"/></svg>
<div class="t" style="left:100px;top:465px;letter-spacing:-0.509px;">[0BBP_VENDOR] Vendor</div>
<div class="hl" style="left:100px;top:480px;width:695px"></div>
<svg class="i" style="left:83px;top:482px;width:16px;height:16px"><use href="#char"/></svg>
<div class="t" style="left:100px;top:485px;letter-spacing:-0.299px;color:#0000ff">[0BBP_UCPROD] Product Description</div>
<svg class="a" style="left:47px;top:506px" width="7" height="7"><path d="M6 0V6H0z" fill="#333"/></svg>
<svg class="i" style="left:63px;top:502px;width:16px;height:16px"><use href="#rows"/></svg>
<div class="t" style="left:79px;top:505px;letter-spacing:-0.068px;">Rows</div>
<svg class="a" style="left:69px;top:526px" width="5" height="9"><path d="M0 0l4 4L0 8z" fill="#333"/></svg>
<svg class="i" style="left:83px;top:522px;width:16px;height:16px"><use href="#char"/></svg>
<div class="t" style="left:100px;top:525px;letter-spacing:-0.237px;">[0CALYEAR] Calendar year</div>
<svg class="a" style="left:69px;top:546px" width="5" height="9"><path d="M0 0l4 4L0 8z" fill="#333"/></svg>
<svg class="i" style="left:83px;top:542px;width:16px;height:16px"><use href="#char"/></svg>
<div class="t" style="left:100px;top:545px;letter-spacing:-0.166px;">[0MATERIAL] Material</div>
<svg class="i" style="left:83px;top:562px;width:16px;height:16px"><use href="#char"/></svg>
<div class="t" style="left:100px;top:565px;letter-spacing:-0.418px;">[0PUR_GROUP] Purchasing Group</div>
<svg class="a" style="left:47px;top:586px" width="7" height="7"><path d="M6 0V6H0z" fill="#333"/></svg>
<svg class="i" style="left:63px;top:582px;width:16px;height:16px"><use href="#cols"/></svg>
<div class="t" style="left:79px;top:585px;letter-spacing:-0.817px;">Columns</div>
<svg class="a" style="left:69px;top:606px" width="5" height="9"><path d="M0 0l4 4L0 8z" fill="#333"/></svg>
<svg class="i" style="left:83px;top:602px;width:16px;height:16px"><use href="#kf"/></svg>
<div class="t" style="left:100px;top:605px;letter-spacing:-0.033px;">Key figures</div>
<svg class="a" style="left:27px;top:626px" width="7" height="7"><path d="M6 0V6H0z" fill="#333"/></svg>
<svg class="i" style="left:43px;top:622px;width:16px;height:16px"><use href="#var"/></svg>
<div class="t" style="left:59px;top:625px;letter-spacing:-0.262px;">Variable Sequence</div>
<svg class="i" style="left:63px;top:642px;width:16px;height:16px"><use href="#var"/></svg>
<div class="t" style="left:79px;top:645px;letter-spacing:-0.119px;">[0I_CALMO] Calendar Month/Year</div>
<svg class="i" style="left:63px;top:662px;width:16px;height:16px"><use href="#var"/></svg>
<div class="t" style="left:79px;top:665px;letter-spacing:-0.532px;">[0P_SEL_CALYEAR] Calendar Year</div>
</div>
</body></html>
